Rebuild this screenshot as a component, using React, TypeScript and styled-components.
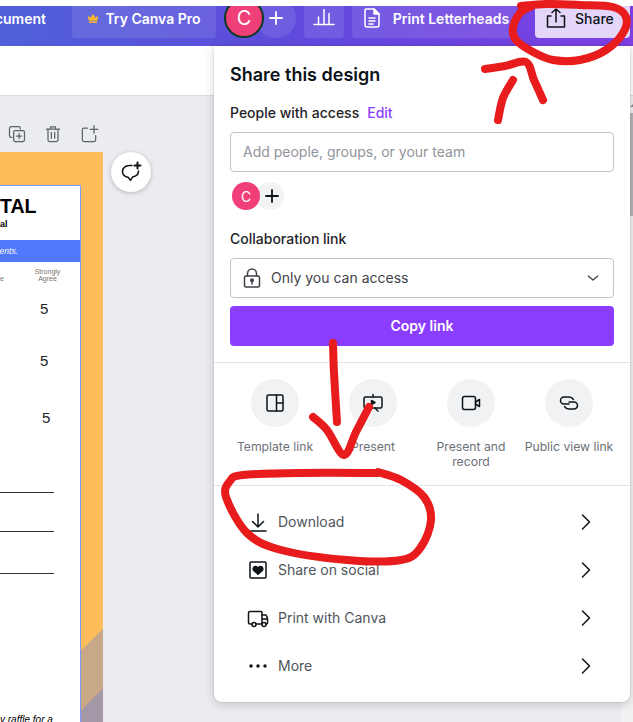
import React from 'react'
import styled, { createGlobalStyle } from 'styled-components'

const GlobalStyle = createGlobalStyle`
  html, body {
    margin: 0;
    padding: 0;
    background: #fff;
  }
  * {
    box-sizing: border-box;
  }
`

const Page = styled.div`
  position: relative;
  width: 633px;
  height: 722px;
  overflow: hidden;
  display: flex;
  flex-direction: column;
  padding-top: 6px;
  background: #fff;
  font-family: Inter, 'Noto Sans', sans-serif;
  color: #0e1318;
`

const Header = styled.header`
  flex: none;
  height: 40px;
  display: flex;
  align-items: flex-start;
  overflow: hidden;
  background: linear-gradient(90deg, #4f60d8 0%, #5f4bdd 45%, #7d3fe3 100%);
  color: #fff;
`

const DocName = styled.div`
  width: 46px;
  height: 32px;
  padding-bottom: 8px;
  display: flex;
  justify-content: flex-end;
  align-items: center;
  margin-right: 26px;
  font-size: 14px;
  font-weight: 600;
`

const HeaderButton = styled.div<{ $width: number; $gap?: number; $inner?: number }>`
  flex: none;
  width: ${({ $width }) => $width}px;
  height: 32px;
  margin-right: ${({ $gap }) => $gap ?? 0}px;
  padding-bottom: 8px;
  display: flex;
  align-items: center;
  justify-content: center;
  gap: ${({ $inner }) => $inner ?? 8}px;
  border-radius: 0 0 4px 4px;
  background: rgba(255, 255, 255, 0.1);
  font-size: 14px;
  font-weight: 600;
`

const ShareButton = styled(HeaderButton)`
  justify-content: flex-start;
  padding-left: 9px;
  background: #e4d6f9;
  color: #0e1318;
  font-weight: 500;
`

const AvatarStack = styled.div`
  flex: none;
  display: flex;
  margin: -8px 8px 0 8px;
`

const HeaderAvatar = styled.div`
  position: relative;
  z-index: 1;
  width: 40px;
  height: 40px;
  display: flex;
  align-items: center;
  justify-content: center;
  border-radius: 50%;
  background: #ef3e78;
  border: 2px solid #0d3a22;
  font-size: 20px;
`

const HeaderPlus = styled.div`
  width: 40px;
  height: 40px;
  margin-left: -8px;
  display: flex;
  align-items: center;
  justify-content: center;
  border-radius: 50%;
  background: rgba(255, 255, 255, 0.1);
`

const TopBar = styled.div`
  flex: none;
  height: 50px;
  background: #fff;
  border-bottom: 1px solid #dcdde1;
`

const Workspace = styled.main`
  flex: 1;
  display: flex;
  background: #ebecf0;
  min-height: 0;
`

const CanvasColumn = styled.div`
  flex: none;
  width: 103px;
  display: flex;
  flex-direction: column;
`

const PageTools = styled.div`
  flex: none;
  height: 56px;
  display: flex;
  align-items: flex-end;
  gap: 16px;
  padding: 0 0 8px 7px;
  color: #5c6269;
`

const Sheet = styled.div`
  flex: 1;
  padding: 33px 22px 0 0;
  background: linear-gradient(135deg, #ffbc5b 410px, #c8a887 410px, #c8a887 452px, #a498a8 452px);
`

const Form = styled.div`
  height: 100%;
  background: #fff;
  border-top: 1px solid #7f9cff;
  border-right: 1px solid #7f9cff;
  display: flex;
  flex-direction: column;
  font-family: 'Liberation Sans', Arial, sans-serif;
  color: #000;
`

const FormTitle = styled.div`
  height: 54px;
  padding: 8px 45px 0 0;
  text-align: right;
  font-size: 19.5px;
  font-weight: 700;
  line-height: 24px;
`

const FormSubtitle = styled.div`
  margin-top: 1px;
  margin-right: 30px;
  font-size: 9px;
  line-height: 10px;
`

const Banner = styled.div`
  height: 22px;
  padding-right: 62px;
  display: flex;
  align-items: center;
  justify-content: flex-end;
  background: #4f78fb;
  color: #fff;
  font-size: 8.5px;
  font-style: italic;
`

const ScaleHead = styled.div`
  height: 25px;
  display: grid;
  grid-template-columns: 34px 27px;
  align-items: center;
  font-size: 7px;
  line-height: 7px;
  color: #77706c;
  text-align: center;
`

const ScaleEdge = styled.div`
  padding-top: 7px;
  text-align: left;
`

const ScoreRow = styled.div<{ $height: number; $indent: number; $top?: number }>`
  height: ${({ $height }) => $height}px;
  padding-top: ${({ $top }) => $top ?? 0}px;
  padding-left: ${({ $indent }) => $indent}px;
  font-size: 15px;
  line-height: 16px;
  color: #222;
`

const Rules = styled.div`
  margin-top: 12px;
  display: flex;
  flex-direction: column;
`

const Rule = styled.div<{ $gap: number }>`
  width: 54px;
  height: 1px;
  margin-top: ${({ $gap }) => $gap}px;
  background: #333;
`

const Raffle = styled.div`
  margin-top: auto;
  margin-bottom: -3px;
  font-size: 10px;
  font-style: italic;
  line-height: 10px;
  white-space: nowrap;
`

const CommentColumn = styled.div`
  flex: none;
  padding: 56px 0 0 8px;
`

const CommentButton = styled.div`
  width: 40px;
  height: 40px;
  display: flex;
  align-items: center;
  justify-content: center;
  border-radius: 50%;
  background: #fff;
  box-shadow: 0 1px 4px rgba(14, 19, 24, 0.25);
`

const ScrollTrack = styled.div`
  margin-left: auto;
  width: 12px;
  background: #f1f1f3;
  display: flex;
  flex-direction: column;
  align-items: flex-end;
  padding-top: 8px;
`

const ScrollArrow = styled.div`
  width: 0;
  height: 0;
  margin-bottom: 6px;
  border-left: 3px solid transparent;
  border-bottom: 3px solid #8d8d93;
`

const ScrollThumb = styled.div`
  width: 3px;
  height: 103px;
  background: #b5b4bb;
`

const Panel = styled.section`
  position: absolute;
  top: 46px;
  left: 214px;
  z-index: 2;
  width: 416px;
  height: 656px;
  background: #fff;
  border-radius: 0 0 8px 8px;
  box-shadow: 0 0 0 1px rgba(14, 19, 24, 0.04), 0 2px 10px rgba(14, 19, 24, 0.2);
`

const ShareSection = styled.div`
  padding: 17px 16px 16px;
  border-bottom: 1px solid #e2e3e6;
`

const Title = styled.h2`
  margin: 0;
  font-size: 18px;
  line-height: 24px;
  font-weight: 600;
`

const FieldLabel = styled.div<{ $top: number }>`
  margin-top: ${({ $top }) => $top}px;
  font-size: 14px;
  line-height: 20px;
  font-weight: 500;
  color: #1f2429;
`

const EditLink = styled.span`
  margin-left: 8px;
  color: #8b3dff;
`

const TextField = styled.div`
  margin-top: 9px;
  height: 40px;
  padding: 0 12px 2px;
  display: flex;
  align-items: center;
  border: 1px solid #bfc3ca;
  border-radius: 4px;
  font-size: 14px;
  color: #90949b;
`

const PeopleRow = styled.div`
  margin-top: 10px;
  padding-left: 2px;
  display: flex;
`

const SmallAvatar = styled.div`
  position: relative;
  z-index: 1;
  width: 28px;
  height: 28px;
  display: flex;
  align-items: center;
  justify-content: center;
  border-radius: 50%;
  background: #ef3e78;
  color: #fff;
  font-size: 14px;
`

const SmallPlus = styled.div`
  width: 28px;
  height: 28px;
  margin-left: -4px;
  padding-left: 4px;
  display: flex;
  align-items: center;
  justify-content: center;
  border-radius: 50%;
  background: #f1f2f4;
`

const AccessSelect = styled.div`
  margin-top: 9px;
  height: 40px;
  padding: 0 12px 0 9px;
  display: flex;
  align-items: center;
  gap: 7px;
  border: 1px solid #bfc3ca;
  border-radius: 4px;
  font-size: 14px;
  color: #3f444b;
`

const RaisedLabel = styled.span`
  margin-bottom: 2px;
`

const SelectChevron = styled.span`
  margin-left: auto;
  display: flex;
`

const CopyButton = styled.div`
  margin-top: 8px;
  height: 40px;
  padding-bottom: 2px;
  display: flex;
  align-items: center;
  justify-content: center;
  border-radius: 4px;
  background: #8b3dff;
  color: #fff;
  font-size: 14px;
  font-weight: 600;
`

const ActionGrid = styled.div`
  height: 123px;
  padding: 16px 12px 0;
  display: grid;
  grid-template-columns: repeat(4, 98px);
  border-bottom: 1px solid #e2e3e6;
`

const Action = styled.div`
  display: flex;
  flex-direction: column;
  align-items: center;
  font-size: 12.2px;
  line-height: 15px;
  color: #6c7077;
  text-align: center;
`

const ActionCircle = styled.div`
  width: 48px;
  height: 48px;
  margin-bottom: 12px;
  display: flex;
  align-items: center;
  justify-content: center;
  border-radius: 50%;
  background: #f1f2f4;
  color: #0e1318;
`

const MenuList = styled.div`
  padding: 12px 0;
`

const MenuRow = styled.div`
  height: 48px;
  padding: 0 32px;
  display: flex;
  align-items: center;
  gap: 8px;
  font-size: 14px;
  color: #50555b;
`

const MenuIcon = styled.span`
  width: 24px;
  height: 24px;
  display: flex;
  color: #0e1318;
`

const MenuChevron = styled.span`
  margin-left: auto;
  width: 24px;
  height: 24px;
  display: flex;
  color: #0e1318;
`

const InkLayer = styled.svg`
  position: absolute;
  inset: 0;
  z-index: 3;
  pointer-events: none;
`

const Icon = ({ children, size = 24, fill = 'none' }: { children: React.ReactNode; size?: number; fill?: string }) => (
  <svg
    width={size}
    height={size}
    viewBox="0 0 24 24"
    fill={fill}
    stroke="currentColor"
    strokeWidth={1.5}
    strokeLinecap="round"
    strokeLinejoin="round"
  >
    {children}
  </svg>
)

const Crown = () => (
  <svg width="12" height="11" viewBox="0 0 14 12" fill="#ffb82e">
    <path d="M1 2.5 4 5 7 .8 10 5l3-2.5L12 8.5H2z" />
    <rect x="2.2" y="9.6" width="9.6" height="1.6" rx=".5" />
  </svg>
)

const ChartIcon = () => (
  <Icon>
    <path d="M2 18.500h20M6.500 18.500V11M12 18.500V3.500M17 18.500V7.500" />
  </Icon>
)

const DocIcon = () => (
  <Icon>
    <path d="M6 3h8l5 5v11a2 2 0 0 1-2 2H7a2 2 0 0 1-2-2V4a1 1 0 0 1 1-1z" />
    <path d="M14 3v5h5z" fill="currentColor" />
    <path d="M9 12h6M9 15h6M9 18h4" />
  </Icon>
)

const UploadIcon = () => (
  <Icon>
    <path d="M7 10H3.500v11h17V10H17M12 16V3M8 6.500 12 3l4 3.500" />
  </Icon>
)

const PlusIcon = () => (
  <Icon size={18}>
    <path d="M12 4v16M4 12h16" strokeWidth={2.4} />
  </Icon>
)

const LockIcon = () => (
  <Icon>
    <rect x="4.500" y="10" width="15" height="11" rx="1.500" />
    <path d="M7.500 10V7.500a4.500 4.500 0 0 1 9 0V10" />
    <circle cx="12" cy="14.300" r="1.300" fill="currentColor" />
    <path d="M12 15v3" />
  </Icon>
)

const ChevronRight = () => (
  <Icon>
    <path d="m8.500 5 7 7-7 7" />
  </Icon>
)

const ChevronDown = () => (
  <Icon size={16}>
    <path d="m5 9 7 6 7-6" strokeWidth={2} />
  </Icon>
)

const TemplateIcon = () => (
  <Icon>
    <rect x="4" y="4" width="16" height="16" rx="1.500" />
    <path d="M13.500 4v16M13.500 12H20" />
  </Icon>
)

const PresentIcon = () => (
  <Icon>
    <rect x="3" y="6" width="18" height="11" rx="1.500" />
    <path d="M12 3.500V6M14 17l3 3" />
    <path d="M10.500 9.500v4l3.500-2z" fill="currentColor" />
  </Icon>
)

const VideoIcon = () => (
  <Icon>
    <rect x="3.500" y="5.500" width="13" height="13" rx="2" />
    <path d="m16.500 11 4-2.500v7l-4-2.500" />
  </Icon>
)

const LinkIcon = () => (
  <Icon>
    <path d="M16.500 8.500C15.500 7 14 6 12 6H7a3.500 3.500 0 0 0 0 7h5" />
    <path d="M7.500 15.500C8.500 17 10 18 12 18h5a3.500 3.500 0 0 0 0-7h-5" />
  </Icon>
)

const DownloadIcon = () => (
  <Icon>
    <path d="M12 4v13M6.500 11.500 12 17l5.500-5.500M4 21h16" />
  </Icon>
)

const HeartIcon = () => (
  <Icon>
    <rect x="4" y="4" width="16" height="16" rx="1" />
    <path
      d="M12 16.300 8 12.600c-1.600-1.600-.6-4 1.400-4 1.100 0 2 .6 2.600 1.600.6-1 1.500-1.600 2.600-1.600 2 0 3 2.400 1.400 4z"
      fill="currentColor"
    />
  </Icon>
)

const TruckIcon = () => (
  <Icon>
    <path d="M6 18H4a1.500 1.500 0 0 1-1.500-1.500V7A1.500 1.500 0 0 1 4 5.500h11a1 1 0 0 1 1 1V18H10" />
    <path d="M16 9h3.500a1 1 0 0 1 1 .7l1 2.800V17a1 1 0 0 1-1 1H20M16 13h5.500" />
    <circle cx="8" cy="18.500" r="2" />
    <circle cx="18" cy="18.500" r="2" />
  </Icon>
)

const DotsIcon = () => (
  <Icon fill="currentColor">
    <circle cx="5" cy="12" r="1" />
    <circle cx="12" cy="12" r="1" />
    <circle cx="19" cy="12" r="1" />
  </Icon>
)

const CopyPlusIcon = () => (
  <Icon size={20}>
    <path d="M6 16H5a2 2 0 0 1-2-2V5a2 2 0 0 1 2-2h9a2 2 0 0 1 2 2v1" />
    <rect x="8" y="8" width="13" height="13" rx="2" />
    <path d="M14.500 11.500v6M11.500 14.500h6" />
  </Icon>
)

const TrashIcon = () => (
  <Icon size={20}>
    <path d="M4 6h16M9 6V3.500h6V6M6 6v13a2 2 0 0 0 2 2h8a2 2 0 0 0 2-2V6M10 10v7M14 10v7" />
  </Icon>
)

const AddPageIcon = () => (
  <Icon size={20}>
    <path d="M10 5H6a2 2 0 0 0-2 2v12a2 2 0 0 0 2 2h12a2 2 0 0 0 2-2v-5M18 2v9M13.500 6.500h9" />
  </Icon>
)

const CommentIcon = () => (
  <Icon>
    <path d="M13 5.500H10.500C6.500 5.500 3.500 8 3.500 11.500c0 3 2.200 5.200 5.500 5.800l2.500 3 2-3.200c3.500-.8 6-3 6-5.800V11" />
    <path d="M18.500 2.500v6M15.500 5.500h6" strokeWidth={2} />
  </Icon>
)

// the hand drawn marks over the screenshot, smoothed through their points
const smooth = (pts: number[][]) => {
  let d = `M${pts[0][0]} ${pts[0][1]}`
  for (let i = 0; i < pts.length - 1; i++) {
    const p0 = pts[i - 1] || pts[i]
    const p1 = pts[i]
    const p2 = pts[i + 1]
    const p3 = pts[i + 2] || p2
    const c1 = [p1[0] + (p2[0] - p0[0]) / 6, p1[1] + (p2[1] - p0[1]) / 6]
    const c2 = [p2[0] - (p3[0] - p1[0]) / 6, p2[1] - (p3[1] - p1[1]) / 6]
    d += ` C${c1[0]} ${c1[1]} ${c2[0]} ${c2[1]} ${p2[0]} ${p2[1]}`
  }
  return d
}

const inkStrokes = [
  [[521, 6], [546, 4], [580, 5], [613, 7], [626, 17], [623, 33], [606, 50], [580, 60], [553, 60], [533, 52], [516, 40], [513, 28], [520, 13], [532, 6]],
  [[485, 69], [505, 66], [526, 62], [534, 80], [543, 100]],
  [[513, 80], [503, 98], [498, 120]],
  [[333, 343], [334, 373], [337, 422]],
  [[313, 417], [327, 430], [344, 455], [356, 432], [369, 407]],
  [[378, 473], [300, 473], [243, 475], [230, 481], [226, 497], [247, 533], [281, 550], [347, 560], [401, 560], [421, 547], [431, 520], [424, 497], [401, 480], [378, 472]],
]

const actions = [
  { label: 'Template link', icon: <TemplateIcon /> },
  { label: 'Present', icon: <PresentIcon /> },
  { label: 'Present and record', icon: <VideoIcon /> },
  { label: 'Public view link', icon: <LinkIcon /> },
]

const menuItems = [
  { label: 'Download', icon: <DownloadIcon /> },
  { label: 'Share on social', icon: <HeartIcon /> },
  { label: 'Print with Canva', icon: <TruckIcon /> },
  { label: 'More', icon: <DotsIcon /> },
]

export default function App() {
  return (
    <Page>
      <GlobalStyle />
      <Header>
        <DocName>cument</DocName>
        <HeaderButton $width={144} $inner={6}>
          <Crown />
          Try Canva Pro
        </HeaderButton>
        <AvatarStack>
          <HeaderAvatar>C</HeaderAvatar>
          <HeaderPlus>
            <PlusIcon />
          </HeaderPlus>
        </AvatarStack>
        <HeaderButton $width={40} $gap={8}>
          <ChartIcon />
        </HeaderButton>
        <HeaderButton $width={165} $gap={18} $inner={9}>
          <DocIcon />
          Print Letterheads
        </HeaderButton>
        <ShareButton $width={95} $inner={7}>
          <UploadIcon />
          Share
        </ShareButton>
      </Header>
      <TopBar />
      <Workspace>
        <CanvasColumn>
          <PageTools>
            <CopyPlusIcon />
            <TrashIcon />
            <AddPageIcon />
          </PageTools>
          <Sheet>
            <Form>
              <FormTitle>
                TAL
                <FormSubtitle>al</FormSubtitle>
              </FormTitle>
              <Banner>ents.</Banner>
              <ScaleHead>
                <ScaleEdge>e</ScaleEdge>
                <div>
                  Strongly
                  <br />
                  Agree
                </div>
              </ScaleHead>
              <ScoreRow $height={66} $top={14} $indent={40}>
                5
              </ScoreRow>
              <ScoreRow $height={57} $indent={40}>
                5
              </ScoreRow>
              <ScoreRow $height={70} $indent={42}>
                5
              </ScoreRow>
              <Rules>
                <Rule $gap={0} />
                <Rule $gap={38} />
                <Rule $gap={41} />
              </Rules>
              <Raffle>y raffle for a</Raffle>
            </Form>
          </Sheet>
        </CanvasColumn>
        <CommentColumn>
          <CommentButton>
            <CommentIcon />
          </CommentButton>
        </CommentColumn>
        <ScrollTrack>
          <ScrollArrow />
          <ScrollThumb />
        </ScrollTrack>
      </Workspace>
      <Panel>
        <ShareSection>
          <Title>Share this design</Title>
          <FieldLabel $top={16}>
            People with access
            <EditLink>Edit</EditLink>
          </FieldLabel>
          <TextField>Add people, groups, or your team</TextField>
          <PeopleRow>
            <SmallAvatar>C</SmallAvatar>
            <SmallPlus>
              <PlusIcon />
            </SmallPlus>
          </PeopleRow>
          <FieldLabel $top={19}>Collaboration link</FieldLabel>
          <AccessSelect>
            <LockIcon />
            <RaisedLabel>Only you can access</RaisedLabel>
            <SelectChevron>
              <ChevronDown />
            </SelectChevron>
          </AccessSelect>
          <CopyButton>Copy link</CopyButton>
        </ShareSection>
        <ActionGrid>
          {actions.map((action) => (
            <Action key={action.label}>
              <ActionCircle>{action.icon}</ActionCircle>
              {action.label}
            </Action>
          ))}
        </ActionGrid>
        <MenuList>
          {menuItems.map((item) => (
            <MenuRow key={item.label}>
              <MenuIcon>{item.icon}</MenuIcon>
              <RaisedLabel>{item.label}</RaisedLabel>
              <MenuChevron>
                <ChevronRight />
              </MenuChevron>
            </MenuRow>
          ))}
        </MenuList>
      </Panel>
      <InkLayer width="633" height="722" viewBox="0 0 633 722">
        {inkStrokes.map((pts, i) => (
          <path key={i} d={smooth(pts)} fill="none" stroke="#e81c1c" strokeWidth={8} strokeLinecap="round" strokeLinejoin="round" />
        ))}
      </InkLayer>
    </Page>
  )
}
